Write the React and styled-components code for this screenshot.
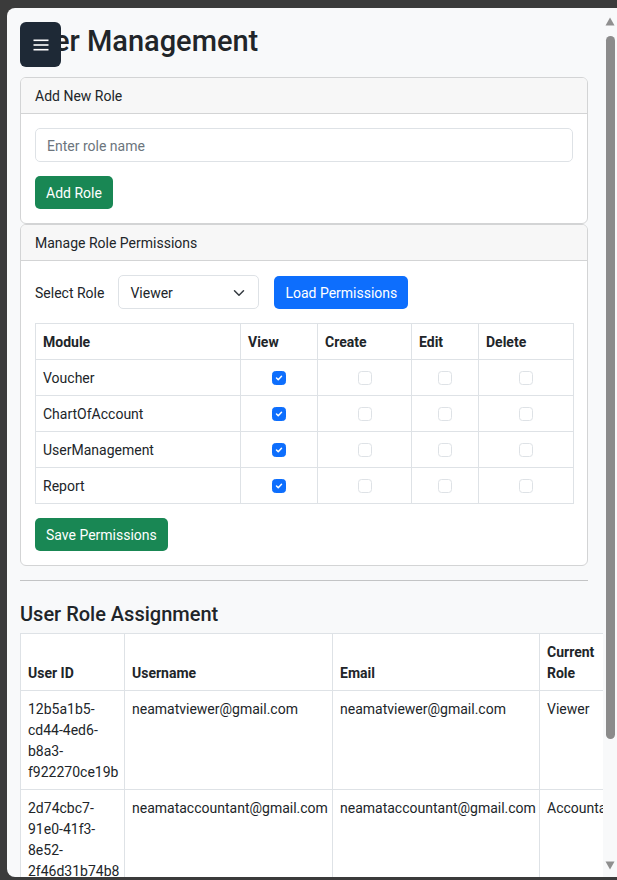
import React from "react";
import styled, { createGlobalStyle } from "styled-components";

const Global = createGlobalStyle`
  html, body { margin: 0; padding: 0; background: #3b3b3b; }
  body { font-family: Roboto, "Noto Sans", Arial, sans-serif; color: #212529; }
  * { box-sizing: border-box; }
`;

const Frame = styled.div`
  height: 880px;
  padding: 8px 0 3px 7px;
  display: flex;
`;

const Window = styled.div`
  flex: 1;
  display: flex;
  min-width: 0;
  background: #f8f9fa;
  border-radius: 8px 0 0 8px;
  overflow: hidden;
`;

const Viewport = styled.main`
  position: relative;
  flex: 1;
  min-width: 0;
  overflow: hidden;
  padding: 16px 0 0 13px;
`;

const Content = styled.div`
  width: 568px;
`;

const MenuButton = styled.button`
  position: absolute;
  left: 13px;
  top: 14px;
  width: 41px;
  height: 45px;
  border: none;
  border-radius: 6px;
  background: #1e2936;
  display: flex;
  align-items: center;
  justify-content: center;
  padding: 0;
`;

const Title = styled.h2`
  margin: 0 0 19px;
  height: 34px;
  font-size: 29px;
  font-weight: 500;
  line-height: 34px;
`;

const Card = styled.section`
  background: #fff;
  border: 1px solid #d3d4d5;
  border-radius: 6px;
  overflow: hidden;
`;

const CardHeader = styled.div`
  height: 36px;
  padding: 1px 14px 0;
  display: flex;
  align-items: center;
  background: #f7f7f7;
  border-bottom: 1px solid #d3d4d5;
  font-size: 14px;
`;

const CardBody = styled.div`
  padding: 14px;
  display: flex;
  flex-direction: column;
  align-items: flex-start;
  gap: 14px;
`;

const TextInput = styled.input`
  width: 100%;
  height: 34px;
  padding: 1px 11px 0;
  border: 1px solid #dee2e6;
  border-radius: 5px;
  font: inherit;
  font-size: 14px;
  color: #212529;
  background: #fff;
  &::placeholder { color: #6c757d; }
`;

const Button = styled.button`
  height: 33px;
  padding: 1px 11px 0;
  border: none;
  border-radius: 5px;
  font: inherit;
  font-size: 14px;
  color: #fff;
  background: ${(p) => (p.$variant === "primary" ? "#0d6efd" : "#198754")};
`;

const Row = styled.div`
  display: flex;
  align-items: center;
`;

const Label = styled.label`
  font-size: 14px;
  margin-right: 14px;
  padding-top: 1px;
`;

const SelectBox = styled.div`
  width: 141px;
  height: 34px;
  margin-right: 15px;
  padding: 1px 11px 0;
  border: 1px solid #dee2e6;
  border-radius: 5px;
  display: flex;
  align-items: center;
  justify-content: space-between;
  font-size: 14px;
  background: #fff;
`;

const Table = styled.table`
  border-collapse: collapse;
  font-size: 14px;
  background: #fff;
  table-layout: fixed;
  width: ${(p) => p.$width}px;
  th, td {
    border: 1px solid #dee2e6;
    padding: 8px 7px 6px;
    line-height: 21px;
    text-align: left;
  }
  th { font-weight: 700; vertical-align: bottom; }
  td { vertical-align: top; }
`;

const CheckCell = styled.td`
  && { text-align: center; vertical-align: middle; padding: 7px; }
`;

const Check = styled.span`
  display: inline-flex;
  width: 14px;
  height: 14px;
  border-radius: 3.5px;
  vertical-align: middle;
  align-items: center;
  justify-content: center;
  background: ${(p) => (p.$on ? "#0d6efd" : "#fff")};
  border: 1px solid ${(p) => (p.$on ? "#0d6efd" : "#dee2e6")};
`;

const Rule = styled.hr`
  margin: 14px 0;
  border: none;
  border-top: 1px solid #c3c4c5;
`;

const SubTitle = styled.h4`
  margin: 21px 0 7px;
  font-size: 20px;
  font-weight: 500;
  line-height: 1.2;
`;

const ScrollBar = styled.div`
  width: 14px;
  flex-shrink: 0;
  display: flex;
  flex-direction: column;
  align-items: center;
  padding: 9px 0 7px;
  background: #f8f9fa;
`;

const Thumb = styled.div`
  width: 9px;
  height: 703px;
  margin-top: 10px;
  border-radius: 5px;
  background: #8b8b8b;
`;

const Spacer = styled.div`
  flex: 1;
`;

const modules = ["Voucher", "ChartOfAccount", "UserManagement", "Report"];
const users = [
  {
    id: ["12b5a1b5-", "cd44-4ed6-", "b8a3-", "f922270ce19b"],
    name: "neamatviewer@gmail.com",
    email: "neamatviewer@gmail.com",
    role: "Viewer",
  },
  {
    id: ["2d74cbc7-", "91e0-41f3-", "8e52-", "2f46d31b74b8"],
    name: "neamataccountant@gmail.com",
    email: "neamataccountant@gmail.com",
    role: "Accountant",
  },
];

const CheckBox = ({ on }) => (
  <Check $on={on}>
    {on && (
      <svg width="10" height="10" viewBox="0 0 20 20">
        <path d="m5 10 3.5 3.5 6.5-7" fill="none" stroke="#fff" strokeWidth="3" strokeLinecap="round" strokeLinejoin="round" />
      </svg>
    )}
  </Check>
);

export default function App() {
  return (
    <>
      <Global />
      <Frame>
        <Window>
          <Viewport>
            <MenuButton aria-label="menu">
              <svg width="16" height="14" viewBox="0 0 16 14">
                <rect x="0.5" y="1.5" width="15" height="1.6" fill="#fff" />
                <rect x="0.5" y="6.2" width="15" height="1.6" fill="#fff" />
                <rect x="0.5" y="10.9" width="15" height="1.6" fill="#fff" />
              </svg>
            </MenuButton>
            <Content>
              <Title>User Management</Title>
              <Card>
                <CardHeader>Add New Role</CardHeader>
                <CardBody>
                  <TextInput placeholder="Enter role name" />
                  <Button>Add Role</Button>
                </CardBody>
              </Card>
              <Card>
                <CardHeader>Manage Role Permissions</CardHeader>
                <CardBody>
                  <Row>
                    <Label>Select Role</Label>
                    <SelectBox>
                      <span>Viewer</span>
                      <svg width="16" height="12" viewBox="0 0 16 16">
                        <path d="m2 5 6 6 6-6" fill="none" stroke="#343a40" strokeWidth="2" strokeLinecap="round" strokeLinejoin="round" />
                      </svg>
                    </SelectBox>
                    <Button $variant="primary">Load Permissions</Button>
                  </Row>
                  <Table $width={538}>
                    <colgroup>
                      <col style={{ width: 205 }} />
                      <col style={{ width: 77 }} />
                      <col style={{ width: 94 }} />
                      <col style={{ width: 67 }} />
                      <col style={{ width: 95 }} />
                    </colgroup>
                    <thead>
                      <tr>
                        <th>Module</th>
                        <th>View</th>
                        <th>Create</th>
                        <th>Edit</th>
                        <th>Delete</th>
                      </tr>
                    </thead>
                    <tbody>
                      {modules.map((m) => (
                        <tr key={m}>
                          <td>{m}</td>
                          <CheckCell><CheckBox on /></CheckCell>
                          <CheckCell><CheckBox /></CheckCell>
                          <CheckCell><CheckBox /></CheckCell>
                          <CheckCell><CheckBox /></CheckCell>
                        </tr>
                      ))}
                    </tbody>
                  </Table>
                  <Button>Save Permissions</Button>
                </CardBody>
              </Card>
              <Rule />
              <SubTitle>User Role Assignment</SubTitle>
              <Table $width={700}>
                <colgroup>
                  <col style={{ width: 104 }} />
                  <col style={{ width: 208 }} />
                  <col style={{ width: 207 }} />
                  <col style={{ width: 90 }} />
                  <col style={{ width: 91 }} />
                </colgroup>
                <thead>
                  <tr>
                    <th>User ID</th>
                    <th>Username</th>
                    <th>Email</th>
                    <th>Current Role</th>
                    <th>Actions</th>
                  </tr>
                </thead>
                <tbody>
                  {users.map((u) => (
                    <tr key={u.name}>
                      <td>{u.id.map((l) => <div key={l}>{l}</div>)}</td>
                      <td>{u.name}</td>
                      <td>{u.email}</td>
                      <td>{u.role}</td>
                      <td></td>
                    </tr>
                  ))}
                </tbody>
              </Table>
            </Content>
          </Viewport>
          <ScrollBar>
            <svg width="10" height="9" viewBox="0 0 10 9">
              <path d="M5 0.5 9.5 8.5H0.5Z" fill="#8f8f8f" />
            </svg>
            <Thumb />
            <Spacer />
            <svg width="10" height="9" viewBox="0 0 10 9">
              <path d="M0.5 0.5H9.5L5 8.5Z" fill="#8f8f8f" />
            </svg>
          </ScrollBar>
        </Window>
      </Frame>
    </>
  );
}
